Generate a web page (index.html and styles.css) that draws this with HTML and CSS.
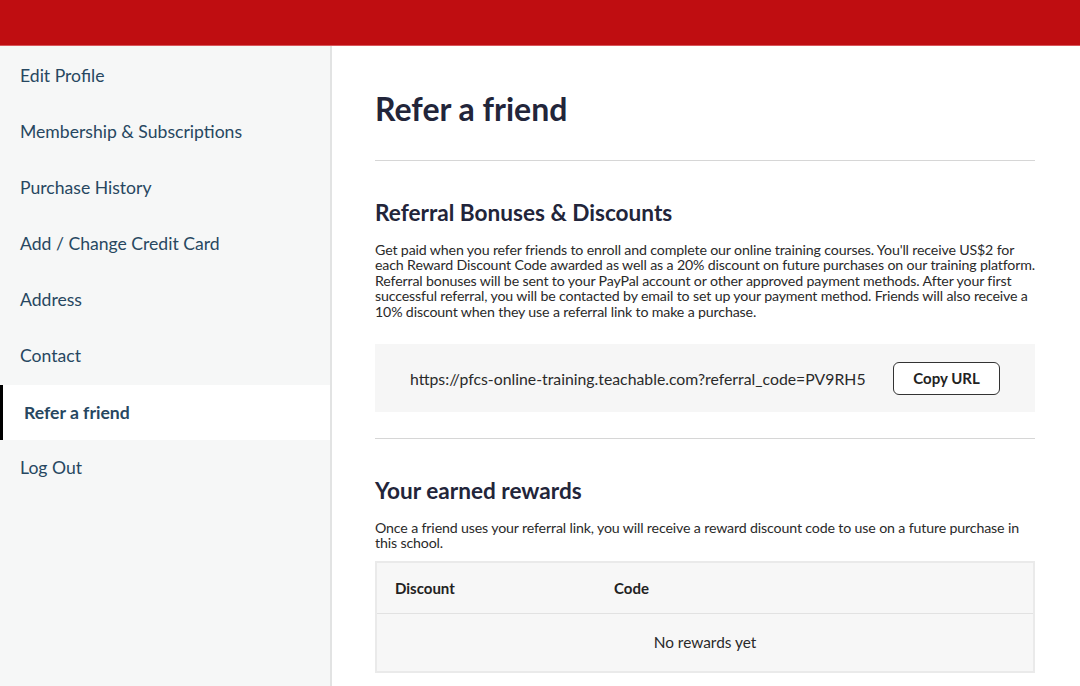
FILE: index.html
```html
<!DOCTYPE html>
<html lang="en">
  <head>
    <meta charset="UTF-8" />
    <meta name="viewport" content="width=device-width, initial-scale=1.0" />
    <title>Refer a friend</title>
    <link rel="stylesheet" href="styles.css">
  </head>
  <body>
    <header class="topbar"></header>

    <div class="layout">
      <nav class="sidebar">
        <a class="nav-item" href="#">Edit Profile</a>
        <a class="nav-item" href="#">Membership &amp; Subscriptions</a>
        <a class="nav-item" href="#">Purchase History</a>
        <a class="nav-item" href="#">Add / Change Credit Card</a>
        <a class="nav-item" href="#">Address</a>
        <a class="nav-item" href="#">Contact</a>
        <a class="nav-item active" href="#">Refer a friend</a>
        <a class="nav-item" href="#">Log Out</a>
      </nav>

      <main class="content">
        <h1 class="page-title">Refer a friend</h1>
        <hr class="divider" />

        <section>
          <h2 class="section-title">Referral Bonuses &amp; Discounts</h2>
          <p class="section-text">
            Get paid when you refer friends to enroll and complete our online training courses. You'll receive US$2 for
            each Reward Discount Code awarded as well as a 20% discount on future purchases on our training platform.
            Referral bonuses will be sent to your PayPal account or other approved payment methods. After your first
            successful referral, you will be contacted by email to set up your payment method. Friends will also receive a
            10% discount when they use a referral link to make a purchase.
          </p>
          <div class="referral-box">
            <span class="referral-url">https://pfcs-online-training.teachable.com?referral_code=PV9RH5</span>
            <button class="copy-btn">Copy URL</button>
          </div>
        </section>

        <hr class="divider" />

        <section>
          <h2 class="section-title">Your earned rewards</h2>
          <p class="section-text">
            Once a friend uses your referral link, you will receive a reward discount code to use on a future purchase in
            this school.
          </p>
          <table class="rewards">
            <thead>
              <tr>
                <th class="col-discount">Discount</th>
                <th>Code</th>
              </tr>
            </thead>
            <tbody>
              <tr>
                <td colspan="2" class="empty">No rewards yet</td>
              </tr>
            </tbody>
          </table>
        </section>
      </main>
    </div>
  </body>
</html>
```

FILE: styles.css
```css
body {
  font-family: "Lato", "Liberation Sans", sans-serif;
  margin: 0;
  padding: 0;
  background-color: #fff;
  color: #252836;
}

.topbar {
  height: 45px;
  background-color: #bf0d11;
  border-bottom: 1px solid #d9555a;
}

.layout {
  display: flex;
  min-height: 640px;
}

.sidebar {
  width: 330px;
  flex-shrink: 0;
  background-color: #f6f7f7;
  border-right: 2px solid #e2e3e3;
  padding-top: 2px;
}

.nav-item {
  display: block;
  height: 56px;
  line-height: 56px;
  padding-left: 20px;
  font-size: 17.6px;
  color: #274761;
  text-decoration: none;
}

.nav-item.active {
  height: 55px;
  line-height: 55px;
  background-color: #fff;
  border-left: 3px solid #000;
  padding-left: 21px;
  font-weight: bold;
  margin-top: 1px;
}

.content {
  width: 660px;
  padding: 0 43px 0 43px;
}

.page-title {
  font-size: 32px;
  font-weight: bold;
  margin: 43px 0 31px;
  line-height: 40px;
  color: #22253a;
}

.divider {
  border: none;
  border-top: 1px solid #d6d6d6;
  margin: 0;
}

.section-title {
  font-size: 22.6px;
  font-weight: bold;
  margin: 38px 0 0;
  line-height: 28px;
  color: #22253a;
}

.section-text {
  font-size: 14.2px;
  line-height: 15.4px;
  margin: 15px 0 0;
  color: #2a2a2a;
  letter-spacing: -0.15px;
}

.referral-box {
  display: flex;
  align-items: center;
  height: 68px;
  margin: 25px 0 26px;
  padding: 0 35px;
  background-color: #f6f6f6;
}

.referral-url {
  font-size: 15.8px;
  color: #2a2a2a;
  flex: 1;
}

.copy-btn {
  font-family: "Lato", "Liberation Sans", sans-serif;
  font-size: 15px;
  font-weight: bold;
  color: #222;
  background-color: #fff;
  border: 1px solid #333;
  border-radius: 6px;
  width: 107px;
  height: 33px;
}

.rewards {
  width: 100%;
  border-collapse: collapse;
  margin-top: 10px;
  background-color: #f7f7f7;
  border: 2px solid #eaeaea;
}

.rewards th {
  text-align: left;
  font-size: 15px;
  font-weight: bold;
  height: 50px;
  padding: 0 18px;
  border-bottom: 1px solid #e2e2e2;
  color: #222;
}

.rewards .col-discount {
  width: 183px;
}

.rewards .empty {
  text-align: center;
  height: 55px;
  font-size: 15.4px;
  color: #2a2a2a;
}
```
